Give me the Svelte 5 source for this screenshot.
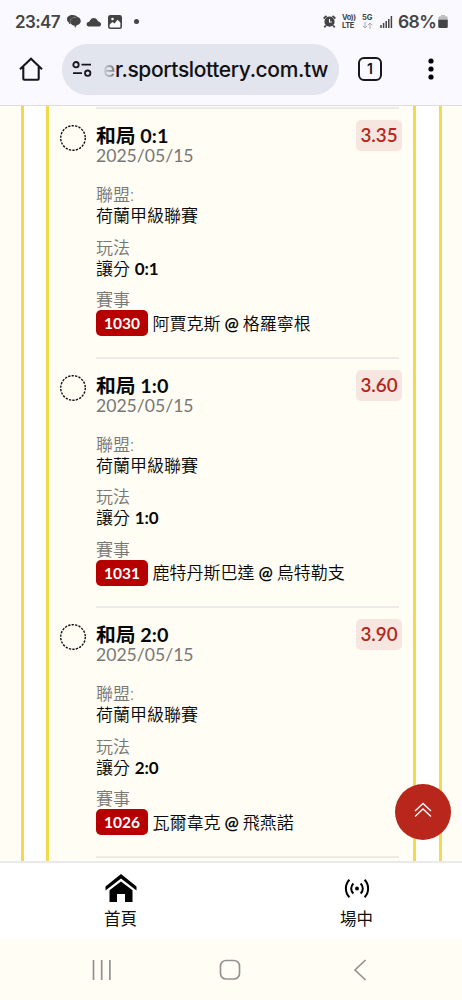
<script lang="ts">
  type Bet = { pick: string; date: string; odds: string; league: string; line: string; code: string; home: string; away: string };

  const bets: Bet[] = [
    { pick: '0:1', date: '2025/05/15', odds: '3.35', league: '荷蘭甲級聯賽', line: '0:1', code: '1030', home: '阿賈克斯', away: '格羅寧根' },
    { pick: '1:0', date: '2025/05/15', odds: '3.60', league: '荷蘭甲級聯賽', line: '1:0', code: '1031', home: '鹿特丹斯巴達', away: '烏特勒支' },
    { pick: '2:0', date: '2025/05/15', odds: '3.90', league: '荷蘭甲級聯賽', line: '2:0', code: '1026', home: '瓦爾韋克', away: '飛燕諾' },
  ];
</script>

<div class="screen">
  <header>
    <div class="status">
      <span class="clock">23:47</span>
      <svg class="chat" width="14" height="13" viewBox="0 0 14 13"><path d="M5.500 0C2.200 0 0 1.800 0 4.200c0 1.500.8 2.600 2 3.300L1.800 9.200l1.800-1C4.500 9.700 6 10.500 7.500 10.500L8 13l1.700-2.700c2.400-.5 4.100-2 4.100-4.200 0-1.900-1.300-3.400-3.200-4C9.500.8 7.700 0 5.500 0z" fill="#444" /><path d="M3.500 7.500C2.500 4.500 5 2.200 9.500 2.200" fill="none" stroke="#999" stroke-width=".7" /></svg>
      <svg class="cloud" width="16" height="10" viewBox="0 0 16 10"><path d="M2.500 9.500A2.300 2.300 0 0 1 2.300 5 C3.500 4.500 3.800 4.300 4.300 3A4 4 0 0 1 11.300 3c.5 1.200 1 1.400 2.200 1.900a2.400 2.400 0 0 1-.2 4.600z" fill="#444" /></svg>
      <svg class="photo" width="14" height="14" viewBox="0 0 14 14"><rect x=".8" y=".8" width="12.400" height="12.400" rx="1.500" fill="none" stroke="#444" stroke-width="1.600" /><path d="M1 1h12v7L9.500 4.800 6.500 8.500 4.500 7 1 10z" fill="#444" /><circle cx="4.500" cy="4" r="1.300" fill="#faf9ff" /></svg>
      <i class="dot"></i>
      <span class="spacer"></span>
      <svg class="alarm" width="13" height="13" viewBox="0 0 13 13"><circle cx="6.500" cy="6.700" r="5.100" fill="#444" /><path d="M.6 3.500 3.500.9M12.400 3.500 9.500.9M2.800 10.500l-1.500 1.900M10.200 10.500l1.500 1.900" stroke="#444" stroke-width="1.700" /><path d="M6.500 4v3h2.300" fill="none" stroke="#faf9ff" stroke-width="1.100" /></svg>
      <span class="tiny volte"><b>Vo))</b><b>LTE</b></span>
      <span class="tiny net"><b>5G</b><svg width="11" height="7" viewBox="0 0 11 7"><path d="M3 0v6M.8 3.800 3 6l2.200-2.200M8 7V1M5.800 3.200 8 1l2.200 2.200" fill="none" stroke="#aaa" stroke-width="1" /></svg></span>
      <svg class="signal" width="13" height="12" viewBox="0 0 13 12"><path d="M1 9v3M3.600 7v5M6.200 5v7M8.800 3v9M11.400 0v12" stroke="#444" stroke-width="1.500" /></svg>
      <span class="percent">68%</span>
      <svg class="battery" width="10" height="13" viewBox="0 0 10 13"><path d="M3 0h4v1.500H3z" fill="#bbb" /><rect x=".3" y="1.200" width="9.400" height="11.800" rx="1.500" fill="#bbb" /><path d="M.3 4.700h9.400v6.800a1.500 1.500 0 0 1-1.500 1.500H1.800a1.500 1.500 0 0 1-1.500-1.500z" fill="#444" /></svg>
    </div>
    <div class="browser">
      <svg class="house" width="24" height="24" viewBox="0 0 24 24"><path d="M1 12.300 12 1.700l11 10.600M4.300 10v11.800a1 1 0 0 0 1 1h13.400a1 1 0 0 0 1-1V10" fill="none" stroke="#16171c" stroke-width="2.100" /></svg>
      <div class="address">
        <svg width="20" height="16" viewBox="0 0 20 16"><g fill="none" stroke="#16171c" stroke-width="1.800"><circle cx="4" cy="3.700" r="2.700" /><path d="M9.500 3.700H19M1 12.200h9" /><circle cx="15.700" cy="12.200" r="2.700" /></g></svg>
        <span class="url"><span class="fade">e</span>r.sportslottery.com.tw</span>
      </div>
      <span class="tabs">1</span>
      <svg class="more" width="6" height="22" viewBox="0 0 6 22"><circle cx="3" cy="3" r="2.600" /><circle cx="3" cy="11" r="2.600" /><circle cx="3" cy="19" r="2.600" /></svg>
    </div>
  </header>

  <main>
    <div class="frame">
      <div class="list">
        {#each bets as bet}
          <article>
            <svg class="pick" width="28" height="28" viewBox="0 0 28 28"><circle cx="14" cy="14" r="12.300" fill="none" stroke="#111" stroke-width="1.400" stroke-dasharray="2.300 1.210" /></svg>
            <div class="detail">
              <h2>和局 {bet.pick}</h2>
              <div class="date">{bet.date}</div>
              <dl>
                <dt>聯盟:</dt>
                <dd>{bet.league}</dd>
                <dt>玩法</dt>
                <dd>讓分 <b>{bet.line}</b></dd>
                <dt>賽事</dt>
                <dd class="match"><span class="code">{bet.code}</span>{bet.home} <b>@</b> {bet.away}</dd>
              </dl>
            </div>
            <span class="odds">{bet.odds}</span>
          </article>
        {/each}
        <div class="end"></div>
      </div>
    </div>
    <button class="top" type="button" aria-label="回到頂部">
      <svg width="18" height="16" viewBox="0 0 18 16"><path d="m1 9 8-7.500L17 9M1 14.500 9 7l8 7.500" fill="none" stroke="#fff" stroke-width="1.300" /></svg>
    </button>
  </main>

  <nav>
    <a href="#home">
      <svg width="32" height="28" viewBox="0 0 32 28"><path d="M.5 12.500 16 0l15.500 12.500v4L16 4.500.5 16.500z" /><path d="M4.500 16.200 16 7.500l11.500 8.700V28H20v-8h-8v8H4.500z" /></svg>
      <span>首頁</span>
    </a>
    <a href="#live">
      <svg width="26" height="28" viewBox="0 0 26 28"><circle cx="13" cy="14.500" r="2" /><path d="M9.400 9.400a7 7 0 0 0 0 10.200M16.600 9.400a7 7 0 0 1 0 10.200M5.400 5.800a12.500 12.500 0 0 0 0 17.400M20.600 5.800a12.500 12.500 0 0 1 0 17.400" fill="none" stroke="#000" stroke-width="2" /></svg>
      <span>場中</span>
    </a>
  </nav>

  <footer>
    <svg width="20" height="20" viewBox="0 0 20 20"><path d="M1.500 0v20M9.700 0v20M17.900 0v20" /></svg>
    <svg class="system-home" width="22" height="22" viewBox="0 0 22 22"><rect x="1.500" y="1.500" width="19" height="18.500" rx="5.500" /></svg>
    <svg width="14" height="22" viewBox="0 0 14 22"><path d="M12.500 1 2 11l10.500 10" /></svg>
  </footer>
</div>

<style>
  :global(body) { background: #fffdf4; }
  .screen { width: 462px; height: 1000px; display: flex; flex-direction: column; overflow: hidden; box-sizing: border-box; font-family: Lato, "Noto Sans CJK TC", sans-serif; color: #111; background: #fffdf4; }
  svg { display: block; flex: none; }

  header { height: 105px; flex: none; border-bottom: 1px solid #dddce2; background: #faf9ff; font-family: Inter, sans-serif; }
  .status { height: 42px; padding: 1px 14px 0 15px; display: flex; align-items: center; box-sizing: border-box; color: #444; }
  .clock { width: 52px; font-size: 17px; font-weight: 600; letter-spacing: -0.6px; }
  .cloud { margin-left: 5px; }
  .photo { margin-left: 6px; }
  .dot { width: 5px; height: 5px; margin-left: 12px; border-radius: 50%; background: #444; }
  .spacer { flex: 1; }
  .tiny { display: flex; flex-direction: column; font-size: 7.500px; line-height: 8px; }
  .volte { width: 14px; margin-left: 6px; letter-spacing: -0.4px; }
  .net { margin-left: 6px; }
  .signal { margin-left: 7px; }
  .percent { margin-left: 5px; width: 40px; font-size: 17.500px; font-weight: 600; letter-spacing: -0.6px; }

  .browser { height: 54px; display: flex; align-items: center; }
  .house { margin-left: 19px; }
  .address { width: 277px; height: 51px; margin-left: 19px; padding-left: 10px; border-radius: 26px; display: flex; align-items: center; box-sizing: border-box; background: #e2e4ee; }
  .url { margin-left: 11px; font-size: 21px; font-weight: 500; white-space: nowrap; letter-spacing: -0.380px; }
  .fade { background: linear-gradient(90deg, #d6d8e1, #75777e); background-clip: text; color: transparent; }
  .tabs { width: 24px; height: 24px; margin-left: 19px; border: 2px solid #16171c; border-radius: 6px; box-sizing: border-box; text-align: center; font-size: 14px; font-weight: 600; line-height: 20px; }
  .more { margin-left: 46px; }

  main { height: 755px; flex: none; position: relative; padding: 0 20.500px; overflow: hidden; }
  .frame { height: 100%; padding: 0 22.500px; border: solid #f3d94c; border-width: 0 3px; box-sizing: border-box; background: #fff; }
  .list { height: 100%; border: solid #f3d94c; border-width: 0 3px; box-sizing: border-box; background: #fffdf4; }
  article { height: 249.700px; display: flex; align-items: flex-start; padding: 1px 12px 0 10px; box-sizing: border-box; }
  .pick { margin: 17px 9px 0 0; }
  .detail { width: 303px; height: 100%; flex: none; border-top: 2px solid #eeebe6; box-sizing: border-box; }
  h2 { margin: 11px 0 0; font-size: 19.800px; line-height: 30px; font-weight: 700; color: #080808; }
  .date { font-size: 17.600px; line-height: 22px; margin-top: -5px; color: #777; }
  dl { margin: 17px 0 0; font-size: 17px; line-height: 21px; }
  dt { color: #777; }
  dt, dd { font-weight: 350; }
  dd { margin: 0 0 10.500px; color: #080808; }
  .match { height: 26px; display: flex; align-items: center; gap: 4px; white-space: nowrap; }
  .code { width: 52px; height: 26px; border-radius: 5px; margin-right: 0.500px; background: #b60000; color: #fff; font-size: 15.500px; font-weight: 700; line-height: 26px; text-align: center; }
  .odds { width: 46px; height: 31px; margin: 13px 0 0 -43px; border-radius: 5px; background: #f7e6df; color: #b3261e; font-size: 18.800px; font-weight: 600; line-height: 30px; text-align: center; flex: none; }
  .end { height: 2px; width: 303px; margin: 1px 0 0 47px; background: #eeebe6; }
  .top { position: absolute; left: 395px; top: 678px; width: 56px; height: 56px; padding: 0 0 4px; border: 0; border-radius: 50%; display: flex; align-items: center; justify-content: center; background: #b8261c; }

  nav { height: 78px; flex: none; display: flex; border-top: 2px solid #eaeaea; box-sizing: border-box; background: #fff; }
  nav a { width: 236px; flex: none; display: flex; flex-direction: column; align-items: center; padding-top: 11px; box-sizing: border-box; color: #111; text-decoration: none; font-size: 16.500px; line-height: 24px; }
  nav a:first-child { margin-left: 2.500px; }
  nav span { margin-top: 5px; }

  footer { flex: 1; display: flex; align-items: center; padding: 0 95px 0 92px; justify-content: space-between; }
  .system-home { margin-right: 5px; }
  footer path, footer rect { fill: none; stroke: #929292; stroke-width: 1.700; }
</style>
